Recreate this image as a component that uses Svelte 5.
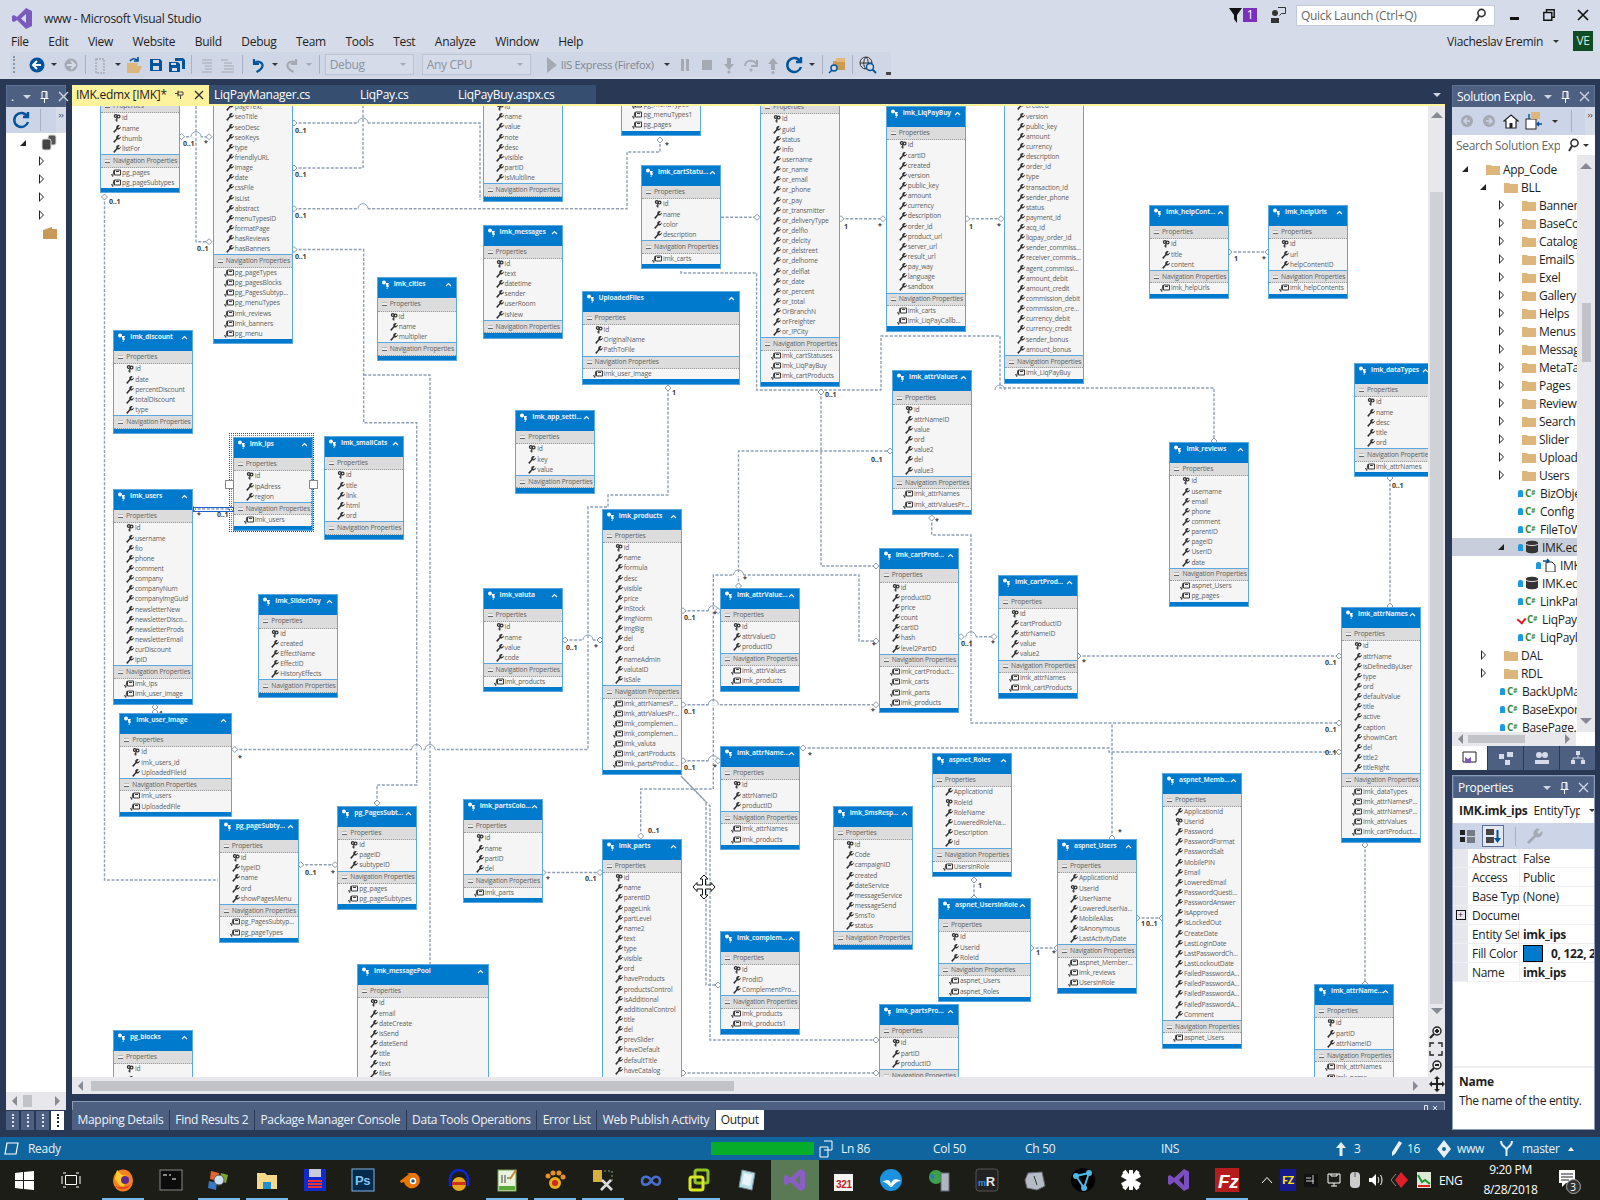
<script>
	// edmx entities: name, x, y, properties, navigation, width. Positions are page coordinates.
	const mk = (name, x, y, props, nav = '', w = 80) => ({
		name,
		left: x - 72,
		top: y - 106,
		w,
		props: props.split('|'),
		nav: nav ? nav.split('|') : []
	});

	const entities = [
		mk('pg_pageTypes', 100, 79, '#id|name|thumb|listFor', 'pg_pages|pg_pageSubtypes'),
		mk('pg_pages', 212.7, 37.5, '#id|name|url|pageText|seoTitle|seoDesc|seoKeys|type|friendlyURL|image|date|cssFile|isList|abstract|menuTypesID|formatPage|hasReviews|hasBanners', 'pg_pageTypes|pg_pagesBlocks|pg_PagesSubtyp...|pg_menuTypes|imk_reviews|imk_banners|pg_menu'),
		mk('pg_blockTypes', 482.6, 67.7, '#id|name|value|note|desc|visible|partID|isMultiline'),
		mk('pg_menu', 621.4, 31.8, '#id|name', 'pg_menuTypes|pg_menuTypes1|pg_pages'),
		mk('imk_cartStatu...', 641, 165, '#id|name|color|description', 'imk_carts'),
		mk('imk_carts', 760, 80, '#id|guid|status|info|username|or_name|or_email|or_phone|or_pay|or_transmitter|or_deliveryType|or_delfio|or_delcity|or_delstreet|or_delhome|or_delflat|or_date|or_percent|or_total|OrBranchN|orFreighter|or_IPCity', 'imk_cartStatuses|imk_LiqPayBuy|imk_cartProducts'),
		mk('imk_LiqPayBuy', 885.7, 106, '#id|cartID|created|version|public_key|amount|currency|description|order_id|product_url|server_url|result_url|pay_way|language|sandbox', 'imk_carts|imk_LiqPayCallb...'),
		mk('imk_LiqPayCallback', 1004, 46.7, '#id|cartID|created|version|public_key|amount|currency|description|order_id|type|transaction_id|sender_phone|status|payment_id|acq_id|liqpay_order_id|sender_commiss...|receiver_commis...|agent_commissi...|amount_debit|amount_credit|commission_debit|commission_cre...|currency_debit|currency_credit|sender_bonus|amount_bonus', 'imk_LiqPayBuy'),
		mk('imk_helpCont...', 1149, 205, '#id|title|content', 'imk_helpUrls'),
		mk('imk_helpUrls', 1268, 205, '#id|url|helpContentID', 'imk_helpContents'),
		mk('imk_messages', 482.6, 224.5, '#id|text|datetime|sender|userRoom|isNew'),
		mk('imk_cities', 376.7, 277.3, '#id|name|multiplier'),
		mk('UploadedFiles', 581.6, 290.8, '#Id|OriginalName|PathToFile', 'imk_user_image', 158),
		mk('imk_discount', 113.3, 330, '#id|date|percentDiscount|totalDiscount|type'),
		mk('imk_ips', 232.7, 437, '#id|ipAdress|region', 'imk_users'),
		mk('imk_smallCats', 324, 436, '#id|title|link|html|ord'),
		mk('imk_users', 113, 489, '#id|username|fio|phone|comment|company|companyNum|companyImgGuid|newsletterNew|newsletterDisco...|newsletterProds|newsletterEmail|curDiscount|ipID', 'imk_ips|imk_user_image'),
		mk('imk_app_setti...', 515.3, 410, '#id|key|value'),
		mk('imk_attrValues', 892, 370.4, '#id|attrNameID|value|ord|value2|del|value3', 'imk_attrNames|imk_attrValuesPr...'),
		mk('imk_reviews', 1169.4, 442, '#id|username|email|phone|comment|parentID|pageID|UserID|date', 'aspnet_Users|pg_pages'),
		mk('imk_dataTypes', 1354, 363, '#id|name|desc|title|ord', 'imk_attrNames'),
		mk('imk_products', 601.7, 508.7, '#id|name|formula|desc|visible|price|inStock|imgNorm|imgBig|del|ord|nameAdmin|valutaID|isSale', 'imk_attrNamesP...|imk_attrValuesPr...|imk_complemen...|imk_complemen...|imk_valuta|imk_cartProducts|imk_partsProduc...'),
		mk('imk_valuta', 482.6, 588, '#id|name|value|code', 'imk_products'),
		mk('imk_SliderDay', 258.3, 594.3, '#id|created|EffectName|EffectID|HistoryEffects'),
		mk('imk_attrValue...', 720, 587.7, '#id|attrValueID|productID', 'imk_attrValues|imk_products'),
		mk('imk_cartProd...', 878.7, 548.3, '#id|productID|price|count|cartID|hash|level2PartID', 'imk_cartProduct...|imk_carts|imk_parts|imk_products'),
		mk('imk_cartProd...', 998, 574.5, '#id|cartProductID|attrNameID|value|value2', 'imk_attrNames|imk_cartProducts'),
		mk('imk_attrNames', 1341, 607, '#id|attrName|isDefinedByUser|type|ord|defaultValue|title|active|caption|showInCart|del|title2|titleRight', 'imk_dataTypes|imk_attrNamesP...|imk_attrNamesP...|imk_attrValues|imk_cartProduct...'),
		mk('imk_user_image', 119.3, 713, '#Id|imk_users_id|UploadedFileId', 'imk_users|UploadedFile', 113),
		mk('imk_attrName...', 720, 746, '#id|attrNameID|productID', 'imk_attrNames|imk_products'),
		mk('aspnet_Roles', 931.7, 753, 'ApplicationId|#RoleId|RoleName|LoweredRoleNa...|Description|Id', 'UsersInRole'),
		mk('aspnet_Memb...', 1162, 772.5, 'ApplicationId|#UserId|Password|PasswordFormat|PasswordSalt|MobilePIN|Email|LoweredEmail|PasswordQuesti...|PasswordAnswer|IsApproved|IsLockedOut|CreateDate|LastLoginDate|LastPasswordCh...|LastLockoutDate|FailedPasswordA...|FailedPasswordA...|FailedPasswordA...|FailedPasswordA...|Comment', 'aspnet_Users'),
		mk('imk_SmsResp...', 832.7, 805.7, '#id|Code|campaignID|created|dateService|messageService|messageSend|SmsTo|status'),
		mk('pg_PagesSubt...', 337.3, 805.7, '#id|pageID|subtypeID', 'pg_pages|pg_pageSubtypes'),
		mk('pg_pageSubty...', 218.7, 818.7, '#id|typeID|name|ord|showPagesMenu', 'pg_PagesSubtyp...|pg_pageTypes'),
		mk('imk_partsColo...', 462.7, 799, '#id|name|partID|del', 'imk_parts'),
		mk('imk_parts', 601.7, 838.7, '#id|name|parentID|pageLink|partLevel|name2|text|type|visible|ord|haveProducts|productsControl|isAdditional|additionalControl|title|del|prevSlider|haveDefault|defaultTitle|haveCatalog|catalogTitle'),
		mk('aspnet_Users', 1057, 839, 'ApplicationId|#UserId|UserName|LoweredUserNa...|MobileAlias|IsAnonymous|LastActivityDate', 'aspnet_Member...|imk_reviews|UsersInRole'),
		mk('aspnet_UsersInRole', 938, 898, '#Id|UserId|RoleId', 'aspnet_Users|aspnet_Roles', 93),
		mk('imk_complem...', 720, 930.6, '#id|ProdID|ComplementPro...', 'imk_products|imk_products1'),
		mk('imk_messagePool', 357, 964, '#id|email|dateCreate|isSend|dateSend|title|text|files|attachments|status', '', 132),
		mk('pg_blocks', 113, 1030, '#id|name|text|type'),
		mk('imk_partsPro...', 878.7, 1004, '#id|partID|productID', 'imk_parts'),
		mk('imk_attrName...', 1314, 984, '#id|partID|attrNameID', 'imk_attrNames|imk_name')
	];

	// [points, diamond at start, diamond at end]
	const links = [
		['181.5,136.7 209,136.7', 1, 1],
		['196,106 196,241.7 209,241.7', 0, 1],
		['104.5,197 104.5,880 218,880', 1, 0],
		['294,123 480,123 480,200', 1, 0],
		['294,208.7 627,208.7 627,152 660,152 660,140', 1, 1],
		['294,168 363,168 363,106', 1, 0],
		['294,249.5 363.7,249.5 363.7,422.7 416.7,422.7 416.7,785 377,785 377,803', 1, 1],
		['363.7,375 430,375 430,964', 0, 0],
		['234.7,749.5 588,749.5 588,507 608,507 608,495 668,495 668,388', 1, 1],
		['565,640 600,640', 1, 1],
		['721,217.3 757,217.3', 0, 1],
		['841,218.7 883,218.7', 1, 1],
		['967,218.7 1001,218.7', 1, 1],
		['681,271 681,273 756.6,273 756.6,390 881,390 881,336 1000,336 1000,388 1214,388 1214,441', 0, 1],
		['821,392 821,566 876,566', 1, 1],
		['683,610.7 718,610.7', 1, 1],
		['683,704.7 876,704.7', 1, 1],
		['683,760.7 718,760.7', 1, 1],
		['640.7,836 640.7,789 713.3,789 713.3,575 859,575 859,641 876,641', 1, 1],
		['738.5,586 738.5,451 890,451', 1, 1],
		['931.7,518 931.7,535 971,535 971,723 1339,723', 1, 1],
		['961,636.7 994,636.7', 1, 1],
		['1078,656 1339,656', 1, 1],
		['803,748 1109,748 1109,752 1339,752', 1, 1],
		['1390,606 1390,478', 1, 1],
		['1112,838 1112,724', 1, 0],
		['974,880 974,898', 1, 1],
		['1031,948 1057,948', 1, 1],
		['1137,918 1162,918', 1, 1],
		['300.7,864.7 335,864.7', 1, 1],
		['543,872.5 600,872.5', 1, 1],
		['681,776 706,802 706,985 718,985', 0, 1],
		['683,778 710,806 710,1040 876,1040', 0, 1],
		['683,1073 876,1073', 1, 1],
		['1229,252 1268,252', 1, 1],
		['1365,845 1365,984', 1, 1],
		['193,509 231,509', 1, 1],
		['155,707 155,712', 1, 1]
	];

	const labels = [
		['0..1', 183, 146], ['*', 204, 145], ['0..1', 197, 251], ['0..1', 109, 204], ['0..1', 295, 133], ['0..1', 295, 177],
		['0..1', 295, 218], ['0..1', 295, 259], ['*', 665, 147], ['1', 844, 229], ['*', 878, 228], ['1', 969, 229], ['*', 997, 228],
		['0..1', 825, 397], ['*', 238, 760], ['1', 672, 395], ['0..1', 566, 650], ['*', 594, 649], ['0..1', 684, 620], ['*', 713, 616],
		['0..1', 684, 714], ['*', 871, 713], ['0..1', 684, 770], ['*', 713, 769], ['0..1', 648, 833], ['*', 872, 647], ['0..1', 871, 462],
		['*', 743, 581], ['*', 935, 523], ['0..1', 961, 646], ['*', 991, 645], ['*', 1082, 664], ['0..1', 1325, 665], ['*', 808, 757],
		['0..1', 1325, 755], ['0..1', 1325, 732], ['0..1', 1392, 488], ['*', 1118, 834], ['1', 978, 888], ['1', 1036, 955], ['*', 1052, 955],
		['1', 1141, 926], ['0..1', 1146, 926], ['0..1', 305, 875], ['*', 331, 875], ['*', 546, 881], ['0..1', 585, 881], ['1', 1234, 261],
		['*', 1262, 261], ['*', 197, 517], ['0..1', 217, 517], ['1', 159, 716], ['*', 152, 703]
	];

	const bridges = [
		[363, 123], [363, 208.7], [416.7, 749.5], [430, 749.5], [713.3, 610.7], [713.3, 704.7], [713.3, 760.7],
		[588, 640], [196, 136.7], [738.5, 575], [1000, 390], [971, 636.7]
	];

	const diamonds = [];
	for (const [pts, a, b] of links) {
		const list = pts.split(' ');
		if (a) diamonds.push(list[0].split(','));
		if (b) diamonds.push(list[list.length - 1].split(','));
	}

	const menu = ['File', 'Edit', 'View', 'Website', 'Build', 'Debug', 'Team', 'Tools', 'Test', 'Analyze', 'Window', 'Help'];
	const bottomTabs = ['Mapping Details', 'Find Results 2', 'Package Manager Console', 'Data Tools Operations', 'Error List', 'Web Publish Activity'];

	const tree = [
		['App_Code', 0, 'open', 'folder'], ['BLL', 1, 'open', 'folder'],
		...['Banner', 'BaseCo', 'Catalog', 'EmailS', 'Exel', 'Gallery', 'Helps', 'Menus', 'Messag', 'MetaTa', 'Pages', 'Review', 'Search', 'Slider', 'Upload', 'Users'].map((t) => [t, 2, 'closed', 'folder']),
		['BizObje', 2, '', 'cs'], ['Config', 2, '', 'cs'], ['FileToW', 2, '', 'cs'],
		['IMK.ed', 2, 'open', 'edmx', 'sel'], ['IMK', 3, '', 'gen'], ['IMK.ed', 2, '', 'db'],
		['LinkPat', 2, '', 'cs'], ['LiqPay.', 2, '', 'check'], ['LiqPayl', 2, '', 'cs'],
		['DAL', 1, 'closed', 'folder'], ['RDL', 1, 'closed', 'folder'],
		['BackUpMa', 1, '', 'cs'], ['BaseExport', 1, '', 'cs'], ['BasePage.', 1, '', 'cs']
	];

	const props = [
		['Abstract', 'False'], ['Access', 'Public'], ['Base Typ', '(None)'], ['Documen', '', 'plus'],
		['Entity Set', 'imk_ips', 'bold'], ['Fill Color', '0, 122, 204', 'swatch'], ['Name', 'imk_ips', 'bold']
	];

	const svg = (w, h, body) => `<svg width="${w}" height="${h}" viewBox="0 0 ${w} ${h}">${body}</svg>`;
	const taskIcons = [
		svg(24, 24, '<path fill="#fff" d="M3 5l8-1v8H3zM12 4l10-1v9H12zM3 13h8v8l-8-1zM12 13h10v9l-10-1z"/>'),
		svg(24, 24, '<path fill="none" stroke="#fff" d="M5.5 7.5h11v9h-11zM3 5h3M3 19h3M16 5h3M16 19h3M20 8v8M2 8v8"/>'),
		svg(24, 24, '<ellipse cx="12" cy="12.500" rx="10" ry="11" fill="#f5811f"/><path fill="#ffcb2e" d="M6 2l5 5 6 1-3 4-1 7-5-2-4-6z"/><circle cx="14" cy="12" r="4" fill="#5e2a8c"/><path fill="#e8431f" d="M4 18c4 4 12 5 16-2-3 3-10 4-16 2z"/>'),
		svg(24, 24, '<rect x="1" y="2" width="22" height="20" fill="#0c0c0c" stroke="#888"/><path stroke="#fff" d="M4 7h4M10 7h2M13 11h4"/>'),
		svg(24, 24, '<path fill="#e8642c" d="M4 3l8 2-1 8-8-2z"/><path fill="#7ca82b" d="M14 5l7 2-2 8-6-2z"/><path fill="#3b78c2" d="M2 13l8 2-1 7-8-2z"/><circle cx="12" cy="12" r="5" fill="#cfe0f3" stroke="#555"/>'),
		svg(24, 24, '<path fill="#f5d98a" d="M2 5h8l2 2h10v14H2z"/><rect x="8" y="14" width="8" height="7" fill="#1f8fd6"/>'),
		svg(24, 24, '<rect x="1" y="1" width="22" height="22" fill="#0f2bd0"/><rect x="6" y="1" width="12" height="8" fill="#c8ccd8"/><path stroke="#e33" stroke-width="2" d="M5 13h14M5 16h14M5 19h14"/>'),
		svg(24, 24, '<rect x="1" y="1" width="22" height="22" fill="#062a4c" stroke="#7fb4e8"/><text x="4" y="17" font-family="Liberation Sans, sans-serif" font-size="13" font-weight="700" fill="#7fc4f0">Ps</text>'),
		svg(24, 24, '<path fill="#ea7600" d="M1 13l9-7-2-1h8a8 8 0 1 1-11 9l-3 1z"/><circle cx="14" cy="13" r="3.2" fill="#fff"/><circle cx="14" cy="13" r="1.8" fill="#265787"/>'),
		svg(24, 24, '<path fill="none" stroke="#0d26d8" stroke-width="2.5" d="M3 18V11a9 9 0 0 1 18 0v7"/><ellipse cx="12" cy="16" rx="7" ry="7" fill="#e8a520"/><rect x="5" y="14" width="14" height="3" fill="#d03018"/>'),
		svg(24, 24, '<rect x="3" y="2" width="18" height="21" fill="#e8f2dc" stroke="#7aa054"/><rect x="4" y="18" width="16" height="4" fill="#59a838"/><path stroke="#444" d="M7 7v8M10 7v8M12 10h4"/><path stroke="#c98a2b" stroke-width="2" d="M21 2l-6 9"/>'),
		svg(24, 24, '<circle cx="12" cy="15" r="6" fill="#e8b018"/><circle cx="12" cy="15" r="3" fill="#d02820"/><circle cx="5" cy="8" r="2.5" fill="#e89020"/><circle cx="10" cy="5" r="2.5" fill="#e89020"/><circle cx="16" cy="5" r="2.5" fill="#e89020"/><circle cx="20" cy="9" r="2.5" fill="#e89020"/>'),
		svg(24, 24, '<rect x="2" y="2" width="9" height="12" fill="#d8b040"/><path stroke="#8a7" stroke-dasharray="2 2" fill="none" d="M13 3h8v10"/><path stroke="#ddd" stroke-width="2.5" d="M11 12l10 10M20 12L10 22"/>'),
		svg(24, 24, '<path fill="none" stroke="#4a6fd0" stroke-width="2.5" d="M12 12c-3-5-9-4-9 1s6 5 9 0c3-6 9-5 9 0s-6 5-9-1z"/>'),
		svg(24, 24, '<rect x="8" y="2" width="13" height="13" rx="2" fill="none" stroke="#8fc31f" stroke-width="3"/><rect x="3" y="9" width="13" height="13" rx="2" fill="none" stroke="#d8e820" stroke-width="3"/>'),
		svg(24, 24, '<path fill="#b8e0ea" stroke="#789" d="M7 2l13 3-3 17-13-3z"/><path fill="#e8f4f8" d="M9 5l8 2-2 11-8-2z"/>'),
		svg(24, 24, '<path fill="#8a5fc4" d="M17 1l5 2.5v17L17 23 7 14l-4 3-2-1V8l2-1 4 3zM17 7l-5 5 5 5z"/>'),
		svg(24, 24, '<rect x="3" y="6" width="19" height="17" fill="#f4f4f4"/><path fill="#222" d="M3 2l19 1v3H3z"/><text x="5" y="20" font-family="Liberation Sans, sans-serif" font-size="10" font-weight="700" fill="#c02020">321</text>'),
		svg(24, 24, '<circle cx="12" cy="12" r="11" fill="#1b92df"/><path fill="#fff" d="M3 14c5-3 8-3 9 2 1-5 5-6 10-3-4 0-7 3-9 6h-2c-2-3-4-5-8-5z"/>'),
		svg(24, 24, '<circle cx="9" cy="9" r="7" fill="#3ca24a"/><path fill="#2a72c8" d="M3 8c3-4 6 0 3 4z"/><rect x="14" y="5" width="8" height="18" fill="#b0b6c0" stroke="#667"/>'),
		svg(24, 24, '<rect x="1" y="1" width="22" height="22" rx="3" fill="#222" stroke="#555"/><text x="3" y="18" font-family="Liberation Sans, sans-serif" font-size="13" font-weight="700" fill="#e8e8e8"><tspan fill="#3a8fe0" font-size="9">m</tspan>R</text>'),
		svg(24, 24, '<path fill="#b6bcc6" stroke="#667" d="M5 5l14-1 3 14-8 4-10-2-2-8z"/><path stroke="#333" d="M11 8l3 9"/>'),
		svg(24, 24, '<circle cx="12" cy="12" r="12" fill="#000"/><g stroke="#4db8e8" stroke-width="2" fill="#4db8e8"><path d="M5 8l13-3-5 15z" fill="none"/><circle cx="5" cy="8" r="2"/><circle cx="18" cy="5" r="2"/><circle cx="13" cy="20" r="2"/></g>'),
		svg(24, 24, '<path stroke="#fff" stroke-width="4" d="M12 2v20M3 7l18 10M21 7L3 17M5 3l14 18M19 3L5 21"/>'),
		svg(24, 24, '<path fill="#7c4dbe" d="M17 1l5 2.5v17L17 23 7 14l-4 3-2-1V8l2-1 4 3zM17 7l-5 5 5 5z"/>'),
		svg(24, 24, '<rect width="24" height="24" fill="#b71c1c"/><text x="3" y="20" font-family="Liberation Sans, sans-serif" font-size="19" font-weight="700" font-style="italic" fill="#fff">Fz</text>')
	];
</script>

<svg class="sprite" width="0" height="0">
	<defs>
		<symbol id="w" viewBox="0 0 8 8"><path d="M.2 6.800 3.400 3.200A2.400 2.400 0 0 1 6.800.300L5 2.200l.9 1 1.800-1.700a2.400 2.400 0 0 1-3.300 2.700L1.300 7.900z" fill="#2e2e2e" /></symbol>
		<symbol id="k" viewBox="0 0 8 8"><g fill="none" stroke="#2e2e2e" stroke-width="1.200"><circle cx="2.800" cy="2" r="1.400" /><circle cx="5.600" cy="2.600" r="1.400" /><path d="M3.800 4v3.600M2.200 6h1.600" /></g></symbol>
		<symbol id="n" viewBox="0 0 10 8"><g fill="none" stroke="#3a3a3a" stroke-width="1"><path d="M3.500 1h6v5h-6zM.5 5l1.200 2.500L3 1" /><path d="M5 2.500h3" /></g></symbol>
		<symbol id="h" viewBox="0 0 9 9"><g fill="#fff"><circle cx="3" cy="2.600" r="2" /><path d="M5 3h3L6.500 6.200V9H5.500L6.500 6.200 5 5z" /><circle cx="6.500" cy="6" r="1.300" /></g></symbol>
	</defs>
</svg>

<div class="app">
	<header class="top">
		<div class="title-row">
			<svg class="vs-logo" width="20" height="21" viewBox="0 0 20 21"><path fill="#7a5bbd" d="M14 0l6 3v15l-6 3L5 12l-3 2-2-1V8l2-1 3 2zM14 6l-5 4.500 5 4.500z" /></svg>
			<span class="win-title">www - Microsoft Visual Studio</span>
			<div class="title-right">
				<svg width="13" height="15" viewBox="0 0 13 15"><path fill="#111" d="M0 0h13L8 7v8L5 11V7z" /></svg>
				<span class="badge">1</span>
				<svg class="fb" width="15" height="16" viewBox="0 0 15 16"><circle cx="4" cy="6" r="3" fill="#333" /><path fill="#333" d="M0 16v-5h8v5z" /><path fill="none" stroke="#333" d="M7 .5h7.500v6h-4l-2 2" /></svg>
				<div class="quick">
					<span>Quick Launch (Ctrl+Q)</span>
					<svg width="14" height="14" viewBox="0 0 14 14"><circle cx="8.500" cy="5" r="3.600" fill="none" stroke="#333" stroke-width="1.600" /><path stroke="#333" stroke-width="2" d="M6 8l-3 5" /></svg>
				</div>
				<div class="winbtns">
					<svg width="10" height="10" viewBox="0 0 10 10"><rect x="0" y="7" width="9" height="3" fill="#111" /></svg>
					<svg width="12" height="12" viewBox="0 0 12 12"><path fill="none" stroke="#111" stroke-width="1.400" d="M3.500 3V.8h7.700v7.400H9M.8 3.500h8v7.700h-8z" /></svg>
					<svg width="12" height="12" viewBox="0 0 12 12"><path stroke="#111" stroke-width="1.700" d="M1 1l10 10M11 1L1 11" /></svg>
				</div>
			</div>
		</div>
		<div class="menu-row">
			<nav class="menu">
				{#each menu as m}<span>{m}</span>{/each}
			</nav>
			<div class="user">
				<span>Viacheslav Eremin</span>
				<i class="caret dark"></i>
				<b class="avatar">VE</b>
			</div>
		</div>
		<div class="toolbar">
			<span class="grip"></span>
			<svg class="ic" width="20" height="20" viewBox="0 0 20 20"><circle cx="10" cy="10" r="7.500" fill="#00539c" /><path stroke="#fff" stroke-width="2" fill="none" d="M14 10H7M10 6l-4 4 4 4" /></svg>
			<i class="caret dark"></i>
			<svg class="ic" width="20" height="20" viewBox="0 0 20 20"><circle cx="10" cy="10" r="6.500" fill="#a4a9b3" /><path stroke="#d6dbe9" stroke-width="2" fill="none" d="M6 10h7M10 6l4 4-4 4" /></svg>
			<span class="sep"></span>
			<svg class="ic" width="20" height="20" viewBox="0 0 20 20"><path fill="none" stroke="#a4a9b3" stroke-width="1.400" stroke-dasharray="2 1" d="M5 4h8v14H5z" /></svg>
			<i class="caret dark"></i>
			<svg class="ic" width="20" height="20" viewBox="0 0 20 20"><path fill="#dcb67a" d="M2 8h11l-1 3h5l-3 7H2z" /><path fill="none" stroke="#00539c" stroke-width="1.600" d="M5 6c2-3 6-3 8 0M13 2v4H9" /></svg>
			<svg class="ic" width="20" height="20" viewBox="0 0 20 20"><path fill="#00539c" d="M4 4h10l2 2v10H4z" /><rect x="7" y="5" width="6" height="3" fill="#d6dbe9" /><rect x="7" y="11" width="6" height="4" fill="#d6dbe9" /></svg>
			<svg class="ic" width="20" height="20" viewBox="0 0 20 20"><path fill="#00539c" d="M2 7h9l2 2v8H2z" /><path fill="#00539c" d="M8 3h8l2 2v9h-3V6H8z" /><rect x="5" y="13" width="5" height="3" fill="#d6dbe9" /><rect x="4" y="8" width="5" height="2" fill="#d6dbe9" /></svg>
			<span class="sep"></span>
			<svg class="ic" width="20" height="20" viewBox="0 0 20 20"><path stroke="#a4a9b3" stroke-width="1.200" d="M5 5h10M5 8h10M8 11h7M8 14h7M5 17h10" /></svg>
			<svg class="ic" width="20" height="20" viewBox="0 0 20 20"><path stroke="#a4a9b3" stroke-width="1.200" d="M3 5h7M6 8h8M6 11h10M6 14h10M3 17h13" /></svg>
			<span class="sep"></span>
			<svg class="ic" width="20" height="20" viewBox="0 0 20 20"><path fill="none" stroke="#00539c" stroke-width="2.200" d="M6 4v5h5M6.500 8.500C9 5 15 7 14.500 11c-.5 3-3 4.500-6 6" /></svg>
			<i class="caret dark"></i>
			<svg class="ic" width="20" height="20" viewBox="0 0 20 20"><path fill="none" stroke="#a4a9b3" stroke-width="2.200" d="M14 4v5H9M13.500 8.500C11 5 5 7 5.500 11c.5 3 3 4.500 6 6" /></svg>
			<i class="caret"></i>
			<span class="sep"></span>
			<div class="dd wide">Debug<i class="caret"></i></div>
			<div class="dd wider">Any CPU<i class="caret"></i></div>
			<svg class="play" width="14" height="20" viewBox="0 0 14 20"><path fill="#a4a9b3" d="M2 2l10 8-10 8z" /></svg>
			<span class="run">IIS Express (Firefox)</span>
			<i class="caret dark"></i>
			<svg class="ic dbg" width="20" height="20" viewBox="0 0 20 20"><path fill="#a4a9b3" d="M6 4h3v12H6zM11 4h3v12h-3z" /></svg>
			<svg class="ic dbg" width="20" height="20" viewBox="0 0 20 20"><rect x="5" y="5" width="10" height="10" fill="#a4a9b3" /></svg>
			<svg class="ic dbg" width="20" height="20" viewBox="0 0 20 20"><path fill="#a4a9b3" d="M8 3h4v6h3l-5 6-5-6h3z" /><circle cx="10" cy="17" r="1.600" fill="#a4a9b3" /></svg>
			<svg class="ic dbg" width="20" height="20" viewBox="0 0 20 20"><path fill="none" stroke="#a4a9b3" stroke-width="2" d="M4 11c0-7 11-7 12 0M16 5v6h-6" /><circle cx="10" cy="15" r="1.600" fill="#a4a9b3" /></svg>
			<svg class="ic dbg" width="20" height="20" viewBox="0 0 20 20"><path fill="#a4a9b3" d="M8 15H12V9h3l-5-6-5 6h3z" /><circle cx="10" cy="17.500" r="1.600" fill="#a4a9b3" /></svg>
			<svg class="ic dbg" width="20" height="20" viewBox="0 0 20 20"><path fill="none" stroke="#00539c" stroke-width="2.400" d="M15 6a7 7 0 1 0 1 6M16 2v5h-5" /></svg>
			<i class="caret dark"></i>
			<span class="sep"></span>
			<svg class="ic" width="20" height="20" viewBox="0 0 20 20"><path fill="#cc9b53" d="M5 6h12v9H5z" /><path fill="#e2b97a" d="M8 3h9v4H8z" /><circle cx="6" cy="13" r="3" fill="#d6dbe9" stroke="#00539c" stroke-width="1.400" /><path stroke="#00539c" stroke-width="1.600" d="M4 15l-3 3" /></svg>
			<span class="sep"></span>
			<svg class="ic" width="20" height="20" viewBox="0 0 20 20"><circle cx="8" cy="8" r="6" fill="none" stroke="#333" /><path stroke="#333" fill="none" d="M2 8h12M8 2c-3 3-3 9 0 12M8 2c3 3 3 9 0 12" /><circle cx="12" cy="12" r="3.500" fill="#d6dbe9" stroke="#00539c" stroke-width="1.400" /><path stroke="#00539c" stroke-width="1.800" d="M14.500 14.500l3.500 3.500" /></svg>
			<span class="more"></span>
		</div>
	</header>

	<main class="workspace">
		<aside class="left">
			<div class="pane-head">
				<span>.</span>
				<i class="caret light"></i>
				<svg class="pin" width="9" height="12" viewBox="0 0 9 12"><path fill="none" stroke="#fff" d="M2 .5h5v7H2zM.5 7.500h8M4.500 8v4M6 1v6" /></svg>
				<svg class="x" width="11" height="11" viewBox="0 0 11 11"><path stroke="#cfd6e5" stroke-width="1.400" d="M1 1l9 9M10 1l-9 9" /></svg>
			</div>
			<div class="pane-tools left-tools">
				<svg width="20" height="20" viewBox="0 0 20 20"><path fill="none" stroke="#00539c" stroke-width="2.400" d="M15 6a7 7 0 1 0 1 6M16 2v5h-5" /></svg>
				<span class="sep tall"></span>
				<span class="chev">››</span>
			</div>
			<div class="left-body">
				<div class="lrow first">
					<i class="tri-open"></i>
					<svg width="16" height="17" viewBox="0 0 16 17"><rect x="7" y="1" width="8" height="10" rx="2" fill="#555" stroke="#ddd" /><rect x="1" y="5" width="9" height="11" rx="2" fill="#444" stroke="#ddd" /></svg>
				</div>
				{#each [0, 1, 2, 3] as i}
					<div class="lrow"><i class="tri-closed"></i></div>
				{/each}
				<div class="lrow folder-row">
					<svg width="14" height="12" viewBox="0 0 14 12"><path fill="#c9995a" d="M0 3l9-3v2h5v10H0z" /></svg>
				</div>
			</div>
			<div class="left-scroll">
				<i class="arrow-l"></i>
				<span class="left-thumb"></span>
				<i class="arrow-r"></i>
			</div>
			<div class="left-tabs">
				<span class="lt"></span><span class="lt"></span><span class="lt"></span><span class="lt on"></span>
			</div>
		</aside>

		<section class="doc">
			<div class="tabstrip">
				<div class="tab active">
					<span>IMK.edmx [IMK]*</span>
					<svg class="tab-pin" width="10" height="10" viewBox="0 0 10 10"><path fill="none" stroke="#444" d="M3 5h5V2H3zM0 3.500h3M3 .5v6M5.500 5v4" /></svg>
					<svg class="tab-x" width="10" height="10" viewBox="0 0 10 10"><path stroke="#333" stroke-width="1.400" d="M1 1l8 8M9 1l-8 8" /></svg>
				</div>
				<div class="rest-tabs">
					<span class="tab t1">LiqPayManager.cs</span>
					<span class="tab t2">LiqPay.cs</span>
					<span class="tab t3">LiqPayBuy.aspx.cs</span>
				</div>
				<i class="caret light strip-caret"></i>
			</div>
			<div class="doc-main">
				<div class="doc-center">
					<div class="canvas">
						<svg class="wires" width="1356" height="971" viewBox="72 106 1356 971">
							{#each links as l}
								<polyline points={l[0]} />
							{/each}
							{#each bridges as b}
								<rect x={b[0] - 5} y={b[1] - 1} width="10" height="2" fill="#fff" stroke="none" />
								<path d="M{b[0] - 5} {b[1]}a5 5 0 0 1 10 0" class="arc" />
							{/each}
							{#each diamonds as d}
								<path class="dia" d="M{d[0]} {+d[1] - 3}l3 3-3 3-3-3z" />
							{/each}
							{#each labels as t}
								<text x={t[1]} y={t[2]}>{t[0]}</text>
							{/each}
						</svg>
						{#each entities as e}
							<div class="entity" style="left:{e.left}px;top:{e.top}px;width:{e.w}px">
								<div class="ent-head">
									<svg class="ent-ico" width="9" height="9"><use href="#h" /></svg>
									<span class="ent-name">{e.name}</span>
									<svg class="ent-chev" width="7" height="5" viewBox="0 0 7 5"><path d="M1 4l2.500-2.500L6 4" fill="none" stroke="#fff" stroke-width="1.200" /></svg>
								</div>
								<div class="sec"><i class="mini"></i>Properties</div>
								{#each e.props as p}
									<div class="row">
										<svg class="row-ico" width="8" height="8"><use href={p[0] === '#' ? '#k' : '#w'} /></svg>
										<span>{p.replace('#', '')}</span>
									</div>
								{/each}
								<div class="sec nav"><i class="mini"></i>Navigation Properties</div>
								{#each e.nav as p}
									<div class="row">
										<svg class="row-ico navi" width="10" height="8"><use href="#n" /></svg>
										<span>{p}</span>
									</div>
								{/each}
								<div class="ent-foot"></div>
							</div>
						{/each}
						<div class="selection">
							<i class="handle hl"></i><i class="handle hr"></i>
						</div>
						<div class="assoc"></div>
						<svg class="mover" width="24" height="26" viewBox="0 0 24 26"><path fill="#fff" stroke="#111" d="M12 1l4 4h-2.500v6H19V8.500l4 4.500-4 4.500V15h-5.500v6H16l-4 4-4-4h2.500v-6H5v2.500L1 13l4-4.500V11h5.500V5H8z" /></svg>
					</div>
					<div class="hscroll">
						<i class="arrow-l"></i>
						<span class="hthumb"></span>
						<i class="arrow-r push"></i>
					</div>
				</div>
				<div class="vscroll">
					<i class="arrow-u"></i>
					<span class="vthumb"></span>
					<i class="arrow-d"></i>
					<div class="zoomers">
						<svg width="14" height="14" viewBox="0 0 14 14"><circle cx="8" cy="6" r="4" fill="none" stroke="#222" stroke-width="1.400" /><path stroke="#222" stroke-width="2" d="M5 9l-4 4M6 6h4M8 4v4" /></svg>
						<svg width="14" height="14" viewBox="0 0 14 14"><path fill="none" stroke="#222" stroke-width="1.400" d="M1 5V1h4M9 1h4v4M13 9v4H9M5 13H1V9" /></svg>
						<svg width="14" height="14" viewBox="0 0 14 14"><circle cx="8" cy="6" r="4" fill="none" stroke="#222" stroke-width="1.400" /><path stroke="#222" stroke-width="2" d="M5 9l-4 4M6 6h4" /></svg>
						<svg width="16" height="16" viewBox="0 0 16 16"><path fill="#222" d="M8 0l3 3H9v4h4V5l3 3-3 3V9H9v4h2l-3 3-3-3h2V9H3v2L0 8l3-3v2h4V3H5z" /></svg>
					</div>
				</div>
			</div>
			<div class="output-head">
				<svg width="14" height="5" viewBox="0 0 14 5" class="oh"><path fill="none" stroke="#dfe5ef" d="M.5 5V.5h3V5M9 1l4 4M13 1L9 5" /></svg>
			</div>
			<div class="bottom-tabs">
				{#each bottomTabs as t}<span class="btab">{t}</span>{/each}
				<span class="btab on">Output</span>
			</div>
		</section>

		<aside class="right">
			<div class="sol">
				<div class="pane-head">
					<span class="pane-title">Solution Explo...</span>
					<i class="caret light"></i>
					<svg class="pin" width="9" height="12" viewBox="0 0 9 12"><path fill="none" stroke="#fff" d="M2 .5h5v7H2zM.5 7.500h8M4.500 8v4M6 1v6" /></svg>
					<svg class="x" width="11" height="11" viewBox="0 0 11 11"><path stroke="#cfd6e5" stroke-width="1.400" d="M1 1l9 9M10 1l-9 9" /></svg>
				</div>
				<div class="pane-tools sol-tools">
					<svg width="16" height="16" viewBox="0 0 16 16"><circle cx="8" cy="8" r="6" fill="#a4a9b3" /><path stroke="#ccd5e8" stroke-width="1.600" fill="none" d="M11 8H5M8 5L5 8l3 3" /></svg>
					<svg width="16" height="16" viewBox="0 0 16 16"><circle cx="8" cy="8" r="6" fill="#a4a9b3" /><path stroke="#ccd5e8" stroke-width="1.600" fill="none" d="M5 8h6M8 5l3 3-3 3" /></svg>
					<svg width="16" height="16" viewBox="0 0 16 16"><path fill="#fff" stroke="#222" stroke-width="1.200" d="M1 8l7-6 7 6h-2v7H3V8z" /><rect x="6.500" y="10" width="3" height="5" fill="#222" /></svg>
					<svg width="18" height="20" viewBox="0 0 18 20"><rect x="1" y="8" width="10" height="10" fill="#fff" stroke="#222" /><path fill="#dcb67a" d="M6 1h9v7H6z" /><path stroke="#00539c" stroke-width="1.400" d="M12 13h5M14 11l-2 2 2 2M4 3v5" /></svg>
					<i class="caret dark"></i>
					<span class="sep tall"></span>
					<span class="chev">››</span>
				</div>
				<div class="sol-search">
					<span>Search Solution Exp</span>
					<svg width="14" height="14" viewBox="0 0 14 14"><circle cx="8.500" cy="5" r="3.600" fill="none" stroke="#333" stroke-width="1.600" /><path stroke="#333" stroke-width="2" d="M6 8l-3 5" /></svg>
					<i class="caret dark"></i>
				</div>
				<div class="tree-wrap">
					<div class="tree">
						{#each tree as [t, d, state, kind, sel]}
							<div class="node" class:sel style="padding-left:{6 + d * 18}px">
								<span class="twisty">
									{#if state === 'open'}<i class="tri-open"></i>{:else if state === 'closed'}<i class="tri-closed"></i>{/if}
								</span>
								{#if kind === 'folder'}
									<svg class="t-ico" width="14" height="12" viewBox="0 0 14 12"><path fill="#dcb67a" d="M0 2h5l1 1h8v9H0z" /></svg>
								{:else if kind === 'gen'}
									<span class="lock"></span>
									<svg class="t-ico" width="14" height="14" viewBox="0 0 14 14"><path fill="#fff" stroke="#222" d="M3 4h6l3 3v7H3z" /><path stroke="#00539c" stroke-width="1.500" d="M0 3h6M4 1l2 2-2 2" /></svg>
								{:else if kind === 'db' || kind === 'edmx'}
									<span class="lock"></span>
									<svg class="t-ico" width="14" height="14" viewBox="0 0 14 14"><path fill="#333" d="M1 3c0-3 12-3 12 0v8c0 3-12 3-12 0z" /><path stroke="#ddd" fill="none" d="M1 4c1 2 11 2 12 0" /></svg>
								{:else}
									<span class="lock" class:check={kind === 'check'}></span>
									<b class="cs">C<small>#</small></b>
								{/if}
								<span class="node-text">{t}</span>
							</div>
						{/each}
					</div>
					<div class="tree-scroll">
						<i class="arrow-u"></i>
						<span class="tree-thumb"></span>
						<i class="arrow-d"></i>
					</div>
				</div>
				<div class="tree-h">
					<i class="arrow-l"></i>
					<span class="tree-hthumb"></span>
					<i class="arrow-r"></i>
				</div>
				<div class="sol-tabs">
					<span class="st on"><svg width="16" height="14" viewBox="0 0 16 14"><path fill="none" stroke="#222" d="M1 1h13v10H1z" /><path fill="#7a5bbd" d="M3 6l3 2 3-2v6H3z" /></svg></span>
					<span class="st"><svg width="16" height="14" viewBox="0 0 16 14"><path fill="#d6dbe9" d="M1 3h5v5H1zM9 1h6v5H9zM7 9h5v5H7z" /></svg></span>
					<span class="st"><svg width="16" height="14" viewBox="0 0 16 14"><circle cx="5" cy="4" r="3" fill="#d6dbe9" /><circle cx="11" cy="4" r="3" fill="#d6dbe9" /><path fill="#d6dbe9" d="M1 13V9h14v4z" /></svg></span>
					<span class="st"><svg width="16" height="14" viewBox="0 0 16 14"><path fill="#d6dbe9" d="M6 0h4v4H6zM1 9h4v4H1zM11 9h4v4h-4z" /><path stroke="#d6dbe9" d="M8 4v3H3v2M8 7h5v2" fill="none" /></svg></span>
				</div>
			</div>

			<div class="prop">
				<div class="pane-head">
					<span class="pane-title">Properties</span>
					<i class="caret light"></i>
					<svg class="pin" width="9" height="12" viewBox="0 0 9 12"><path fill="none" stroke="#fff" d="M2 .5h5v7H2zM.5 7.500h8M4.500 8v4M6 1v6" /></svg>
					<svg class="x" width="11" height="11" viewBox="0 0 11 11"><path stroke="#cfd6e5" stroke-width="1.400" d="M1 1l9 9M10 1l-9 9" /></svg>
				</div>
				<div class="prop-title">
					<b>IMK.imk_ips</b>
					<span class="prop-type">EntityTyp</span>
					<i class="caret dark"></i>
				</div>
				<div class="prop-tools">
					<svg width="16" height="16" viewBox="0 0 16 16"><path fill="#222" d="M1 2h5v5H1zM1 9h5v5H1z" /><path stroke="#222" d="M8 3h8M8 5h8M8 7h8M8 10h8M8 12h8M8 14h8" /></svg>
					<span class="sort">
						<svg width="16" height="16" viewBox="0 0 16 16"><rect x="1" y="1" width="8" height="6" fill="#444" /><rect x="1" y="9" width="8" height="6" fill="#444" /><path stroke="#00539c" stroke-width="2" d="M12.500 2v11" /><path fill="#00539c" d="M9 10h7l-3.500 5z" /></svg>
					</span>
					<span class="sep tall small"></span>
					<svg width="17" height="17" viewBox="0 0 17 17"><path fill="#a4a9b3" d="M1 14l7-7a4.500 4.500 0 0 1 6-6l-3 3 2 2 3-3a4.500 4.500 0 0 1-6 6l-7 7z" /></svg>
				</div>
				<div class="grid">
					{#each props as [k, v, kind]}
						<div class="grid-row">
							<span class="gutter">{#if kind === 'plus'}<i class="plus">+</i>{/if}</span>
							<span class="g-key">{k}</span>
							<span class="g-val" class:strong={kind === 'bold' || kind === 'swatch'}>
								{#if kind === 'swatch'}<i class="swatch"></i>{/if}{v}
							</span>
						</div>
					{/each}
				</div>
				<div class="prop-desc">
					<b>Name</b>
					<span>The name of the entity.</span>
				</div>
			</div>
		</aside>
	</main>

	<footer class="status">
		<svg class="st-ready" width="15" height="13" viewBox="0 0 15 13"><path fill="none" stroke="#fff" stroke-width="1.200" d="M3 1h11l-2 11H1z" /></svg>
		<span class="ready">Ready</span>
		<span class="progress"></span>
		<svg class="copy" width="14" height="18" viewBox="0 0 14 18"><path fill="none" stroke="#fff" d="M5 1h8v9H5M1 7h8v10H1z" /></svg>
		<span class="cell c-ln">Ln 86</span>
		<span class="cell c-col">Col 50</span>
		<span class="cell c-col">Ch 50</span>
		<span class="cell c-ins">INS</span>
		<svg width="10" height="14" viewBox="0 0 10 14"><path fill="#e8eef4" d="M5 0l5 6H6.500v8h-3V6H0z" /></svg>
		<span class="cell c-n">3</span>
		<svg width="12" height="16" viewBox="0 0 12 16"><path fill="#e8eef4" d="M9 0l3 2-7 11-3 2 0-4z" /></svg>
		<span class="cell c-n2">16</span>
		<svg width="14" height="18" viewBox="0 0 14 18"><path fill="#e8eef4" d="M7 0l7 9-7 9-7-9z" /><circle cx="7" cy="9" r="2" fill="#10659e" /></svg>
		<span class="cell c-www">www</span>
		<svg width="15" height="17" viewBox="0 0 15 17"><path fill="none" stroke="#e8eef4" stroke-width="2" d="M2 1c0 6 5 5 5.500 9v6M13 1c0 6-5 5-5.500 9" /></svg>
		<span class="cell c-master">master</span>
		<i class="caret up"></i>
	</footer>

	<div class="taskbar">
		{#each taskIcons as icon, i}
			<span class="slot" class:hot={i === 16} class:gap={i === 2} class:live={[2, 4, 5, 10, 11, 12, 14, 25].includes(i)}>{@html icon}</span>
		{/each}
		<div class="tray">
			<svg width="12" height="8" viewBox="0 0 12 8"><path fill="none" stroke="#fff" d="M1 7l5-5.500L11 7" /></svg>
			<span class="fz">FZ</span>
			<svg width="16" height="16" viewBox="0 0 16 16"><rect x="1" y="2" width="14" height="13" fill="#111" /><path stroke="#ccc" d="M3 6h5M3 9h8M10 3v9" /></svg>
			<svg width="16" height="18" viewBox="0 0 16 18"><path fill="none" stroke="#fff" d="M2 3h12v9H2zM5 15h6M8 12v3M5 3v2h6V3" /></svg>
			<svg width="12" height="18" viewBox="0 0 12 18"><rect x="1" y="1" width="10" height="16" rx="4" fill="#ccc" /><path stroke="#555" d="M6 1v5" /></svg>
			<svg width="16" height="16" viewBox="0 0 16 16"><path fill="#fff" d="M1 6h3l4-4v12l-4-4H1z" /><path fill="none" stroke="#fff" d="M10 5c1 2 1 4 0 6M12.500 3c2 3 2 7 0 10" /></svg>
			<svg width="18" height="18" viewBox="0 0 18 18"><path fill="none" stroke="#888" d="M5 3L0 9l5 6" /><path fill="#e01f2d" d="M10 1l7 8-7 8-6-8z" /></svg>
			<svg width="16" height="18" viewBox="0 0 16 18"><rect x="1" y="1" width="14" height="16" fill="#dfe8d8" /><path fill="none" stroke="#1a9a2c" stroke-width="2" d="M2 4l4 7 3-2 5 4" /><path stroke="#d22" stroke-width="2" d="M2 15h12" /></svg>
			<span class="lang">ENG</span>
			<div class="clock"><span>9:20 PM</span><span>8/28/2018</span></div>
			<div class="notif">
				<svg width="18" height="18" viewBox="0 0 18 18"><path fill="#fff" d="M1 1h16v13H8l-4 4v-4H1z" /><path stroke="#222" d="M3 5h12M3 8h12M3 11h8" /></svg>
				<b>3</b>
			</div>
		</div>
	</div>
</div>

<style>
	:global(body) {
		margin: 0;
		background: #293955;
	}

	.sprite {
		position: absolute;
	}

	.app {
		width: 1600px;
		height: 1200px;
		overflow: hidden;
		display: flex;
		flex-direction: column;
		font-family: 'Open Sans', 'Noto Sans', sans-serif;
		font-size: 12px;
		letter-spacing: -0.3px;
		color: #1e1e1e;
	}

	i {
		display: block;
		flex: none;
	}

	.top {
		height: 79px;
		background: #d6dbe9;
		flex: none;
		display: flex;
		flex-direction: column;
	}

	.title-row {
		height: 30px;
		display: flex;
		align-items: center;
		padding-left: 12px;
	}

	.vs-logo {
		margin-top: 6px;
	}

	.win-title {
		margin: 6px 0 0 12px;
	}

	.title-right {
		margin-left: auto;
		display: flex;
		align-items: center;
	}

	.badge {
		width: 14px;
		height: 14px;
		margin-left: 1px;
		background: #7a2fbd;
		color: #fff;
		text-align: center;
		line-height: 14px;
	}

	.fb {
		margin-left: 14px;
	}

	.quick {
		width: 199px;
		height: 21px;
		box-sizing: border-box;
		margin-left: 10px;
		background: #fff;
		border: 1px solid #c2c9d9;
		display: flex;
		align-items: center;
		justify-content: space-between;
		padding: 0 7px 0 4px;
		color: #666;
	}

	.winbtns {
		width: 105px;
		display: flex;
		justify-content: space-between;
		padding: 0 11px 0 15px;
		box-sizing: border-box;
		align-items: center;
	}

	.menu-row {
		height: 22px;
		display: flex;
		align-items: center;
	}

	.menu {
		display: flex;
		gap: 19.5px;
		padding-left: 11px;
	}

	.user {
		margin-left: auto;
		display: flex;
		align-items: center;
		gap: 7px;
		padding-right: 7px;
	}

	.avatar {
		width: 20px;
		height: 20px;
		background: #0e4d23;
		color: #d5e8da;
		text-align: center;
		line-height: 20px;
		font-weight: 400;
		margin-left: 4px;
	}

	.toolbar {
		width: 881px;
		height: 25px;
		margin: 0 0 0 10px;
		padding-left: 0;
		background: #cfd6e5;
		display: flex;
		align-items: center;
		gap: 1px;
	}

	.grip {
		width: 3px;
		height: 17px;
		margin: 0 8px 0 3px;
		border-left: 2px dotted #8a94a8;
	}

	.ic {
		flex: none;
	}

	.dbg {
		margin-left: 1px;
	}

	.caret {
		width: 0;
		height: 0;
		border-left: 3px solid transparent;
		border-right: 3px solid transparent;
		border-top: 3px solid #a4a9b3;
		margin: 0 3px;
	}

	.caret.dark {
		border-top-color: #333;
	}

	.caret.light {
		border-top-color: #cfd6e5;
		border-left-width: 4px;
		border-right-width: 4px;
		border-top-width: 4px;
	}

	.caret.up {
		border-top: none;
		border-bottom: 4px solid #fff;
		margin-left: 8px;
	}

	.sep {
		width: 1px;
		height: 19px;
		background: #a8b0c2;
		margin: 0 3.5px;
		flex: none;
	}

	.sep.tall {
		height: 22px;
	}

	.sep.small {
		height: 19px;
	}

	.dd {
		height: 21px;
		box-sizing: border-box;
		border: 1px solid #bcc4d4;
		background: #d6dbe9;
		color: #8a93a3;
		display: flex;
		align-items: center;
		justify-content: space-between;
		padding: 0 4px;
		margin-right: 7px;
		flex: none;
	}

	.dd.wide {
		width: 89px;
	}

	.dd.wider {
		width: 109px;
	}

	.play {
		margin-left: 6px;
		flex: none;
	}

	.run {
		color: #7f8794;
		font-size: 11px;
		margin: 0 6px 0 1px;
		white-space: nowrap;
		flex: none;
	}

	.more {
		width: 6px;
		height: 4px;
		margin-left: 7px;
		border-bottom: 3px solid #444;
		align-self: flex-end;
		margin-bottom: 2px;
	}

	.workspace {
		flex: 1;
		min-height: 0;
		background: #293955;
		display: flex;
		padding-top: 6px;
	}

	.left {
		width: 60px;
		margin: 0 6px;
		flex: none;
		display: flex;
		flex-direction: column;
		height: 1045px;
	}

	.pane-head {
		height: 22px;
		flex: none;
		box-sizing: border-box;
		background: #4d6082;
		color: #fff;
		display: flex;
		align-items: center;
		gap: 6px;
		padding: 0 4px;
		border: 1px solid #5d7192;
		border-bottom: none;
	}

	.pane-title {
		flex: 1;
		white-space: nowrap;
		overflow: hidden;
	}

	.left .pane-head span {
		margin-right: auto;
	}

	.pin {
		flex: none;
	}

	.x {
		flex: none;
		margin-left: 3px;
	}

	.pane-tools {
		flex: none;
		display: flex;
		align-items: center;
		background: #ccd5e8;
	}

	.left-tools {
		height: 26px;
		padding-left: 6px;
		gap: 4px;
	}

	.chev {
		margin-left: auto;
		width: 10px;
		height: 100%;
		background: #d6dbe9;
		font-size: 9px;
		line-height: 16px;
		color: #333;
		text-align: center;
		flex: none;
	}

	.left-body {
		flex: 1;
		min-height: 0;
		background: #fff;
	}

	.lrow {
		height: 18px;
		display: flex;
		align-items: center;
		padding-left: 33px;
	}

	.lrow.first {
		padding-left: 14px;
		gap: 15px;
		margin-bottom: 0;
		height: 19px;
	}

	.folder-row {
		padding-left: 37px;
	}

	.tri-open {
		width: 0;
		height: 0;
		border-left: 6px solid transparent;
		border-bottom: 6px solid #222;
	}

	.tri-closed {
		width: 0;
		height: 0;
		border-left: 5px solid #222;
		border-top: 5px solid transparent;
		border-bottom: 5px solid transparent;
		position: relative;
	}

	.tri-closed::after {
		content: '';
		position: absolute;
		left: -4px;
		top: -3px;
		border-left: 3px solid #fff;
		border-top: 3px solid transparent;
		border-bottom: 3px solid transparent;
	}

	.left-scroll {
		height: 18px;
		flex: none;
		background: #e8e8ec;
		display: flex;
		align-items: center;
		padding: 0 6px;
	}

	.left-thumb {
		width: 9px;
		height: 12px;
		background: #c2c3c9;
		margin: 0 auto 0 6px;
	}

	.arrow-l {
		width: 0;
		height: 0;
		border-right: 5px solid #878a93;
		border-top: 5px solid transparent;
		border-bottom: 5px solid transparent;
	}

	.arrow-r {
		width: 0;
		height: 0;
		border-left: 5px solid #878a93;
		border-top: 5px solid transparent;
		border-bottom: 5px solid transparent;
	}

	.arrow-u {
		width: 0;
		height: 0;
		margin: 0 auto;
		border-bottom: 6px solid #878a93;
		border-left: 6px solid transparent;
		border-right: 6px solid transparent;
	}

	.arrow-d {
		width: 0;
		height: 0;
		margin: 0 auto;
		border-top: 6px solid #878a93;
		border-left: 6px solid transparent;
		border-right: 6px solid transparent;
	}

	.left-tabs {
		margin-top: 1px;
		flex: none;
		display: flex;
		gap: 2px;
		height: 19px;
	}

	.lt {
		width: 13px;
		background: #4d6082;
		border-left: 0;
		position: relative;
	}

	.lt::after {
		content: '';
		position: absolute;
		left: 6px;
		top: 3px;
		height: 13px;
		border-left: 2px dotted #dfe5ef;
	}

	.lt.on {
		background: #fff;
	}

	.lt.on::after {
		border-left-color: #222;
	}

	.doc {
		width: 1373px;
		flex: none;
		display: flex;
		flex-direction: column;
	}

	.tabstrip {
		height: 19px;
		flex: none;
		display: flex;
		align-items: stretch;
		border-bottom: 2px solid #fff29d;
		position: relative;
	}

	.tab {
		color: #fff;
		line-height: 20px;
		white-space: nowrap;
	}

	.tab.active {
		width: 137px;
		box-sizing: border-box;
		background: #fff29d;
		color: #222;
		display: flex;
		align-items: center;
		padding-left: 4px;
		gap: 5px;
	}

	.tab-pin {
		margin-left: auto;
	}

	.tab-x {
		margin: 0 5px 0 4px;
	}

	.rest-tabs {
		width: 387px;
		background: #364e6f;
		display: flex;
	}

	.t1 {
		margin-left: 5px;
		width: 146px;
	}

	.t2 {
		width: 98px;
	}

	.strip-caret {
		position: absolute;
		right: 4px;
		top: 8px;
		margin: 0;
	}

	.doc-main {
		height: 988px;
		flex: none;
		display: flex;
	}

	.doc-center {
		width: 1356px;
		flex: none;
		display: flex;
		flex-direction: column;
	}

	.canvas {
		height: 971px;
		flex: none;
		position: relative;
		overflow: hidden;
		background: #fff;
		font-size: 6.7px;
		letter-spacing: -0.15px;
		color: #5f5f5f;
	}

	.wires {
		position: absolute;
		left: 0;
		top: 0;
		fill: none;
		stroke: #8fa0b5;
		stroke-width: 1.4;
		stroke-dasharray: 3 1.6;
	}

	.arc {
		stroke-dasharray: none;
		stroke-width: 1;
	}

	.dia {
		fill: #fff;
		stroke-dasharray: none;
		stroke-width: 0.8;
		stroke: #6f8298;
	}

	.wires text {
		font-size: 7px;
		font-weight: 700;
		fill: #3a3a3a;
		stroke: none;
		font-family: 'Open Sans', sans-serif;
	}

	.entity {
		position: absolute;
		box-sizing: border-box;
		border: 1px solid #5aa8de;
		background: #f5f5f5;
		white-space: nowrap;
	}

	.ent-head {
		height: 20px;
		background: #007acc;
		position: relative;
		color: #e2f0fa;
		font-weight: 700;
	}

	.ent-ico {
		position: absolute;
		left: 3px;
		top: 2px;
	}

	.ent-name {
		position: absolute;
		left: 16px;
		top: 1px;
		line-height: 10px;
	}

	.ent-chev {
		position: absolute;
		right: 4px;
		top: 4px;
	}

	.sec {
		height: 13.4px;
		background: #dcdcdc;
		border-bottom: 1px dotted #9a9a9a;
		box-sizing: border-box;
		display: flex;
		align-items: center;
		line-height: 12px;
		padding-left: 4px;
		gap: 3px;
		overflow: hidden;
	}

	.sec.nav {
		height: 13.6px;
		border-top: 1px solid #5aa8de;
	}

	.mini {
		width: 5px;
		height: 4px;
		border-bottom: 1px solid #666;
		border-top: 1px solid #bbb;
		background: #eee;
		box-sizing: border-box;
	}

	.row {
		height: 10.15px;
		line-height: 10.15px;
		position: relative;
		padding-left: 21px;
		overflow: hidden;
	}

	.row-ico {
		position: absolute;
		left: 12px;
		top: 1px;
	}

	.navi {
		left: 10px;
	}

	.ent-foot {
		height: 4.4px;
		background: #007acc;
	}

	.selection {
		position: absolute;
		left: 157px;
		top: 327px;
		width: 85px;
		height: 99px;
		border: 1px dotted #444;
		box-sizing: border-box;
		outline: 1px dotted #777;
		outline-offset: -3px;
	}

	.handle {
		position: absolute;
		top: 46px;
		width: 7px;
		height: 7px;
		background: #fff;
		border: 1px solid #888;
	}

	.hl {
		left: -5px;
	}

	.hr {
		right: -5px;
	}

	.assoc {
		position: absolute;
		left: 121px;
		top: 401px;
		width: 39px;
		height: 3px;
		border: 1px solid #1a5fd0;
	}

	.mover {
		position: absolute;
		left: 620px;
		top: 768px;
	}

	.hscroll {
		height: 17px;
		flex: none;
		background: #e8e8ec;
		display: flex;
		align-items: center;
		padding: 0 6px;
	}

	.hthumb {
		width: 643px;
		height: 10px;
		background: #c2c3c9;
		margin-left: 8px;
	}

	.push {
		margin-left: auto;
		margin-right: 4px;
	}

	.vscroll {
		width: 17px;
		flex: none;
		background: #e8e8ec;
		padding-top: 6px;
		display: flex;
		flex-direction: column;
		position: relative;
	}

	.vthumb {
		width: 13px;
		height: 812px;
		margin: 74px auto 4px;
		background: #d0d1d7;
	}

	.zoomers {
		position: absolute;
		left: 1px;
		bottom: 2px;
		display: flex;
		flex-direction: column;
		gap: 3px;
	}

	.output-head {
		height: 9px;
		margin-top: 7px;
		flex: none;
		background: #4d6082;
		border: 1px solid #8a9bb8;
		border-bottom: none;
		box-sizing: border-box;
		position: relative;
	}

	.oh {
		position: absolute;
		right: 6px;
		bottom: 0;
	}

	.bottom-tabs {
		height: 20px;
		flex: none;
		display: flex;
		gap: 1px;
		background: #293955;
		color: #f0f3f8;
	}

	.btab {
		background: #4d6082;
		padding: 0 5.5px;
		line-height: 19px;
		white-space: nowrap;
	}

	.btab.on {
		background: #fff;
		color: #1e1e1e;
		padding: 0 5px;
	}

	.right {
		width: 143px;
		margin-left: 7px;
		flex: none;
		display: flex;
		flex-direction: column;
		gap: 5px;
	}

	.sol {
		height: 685px;
		flex: none;
		display: flex;
		flex-direction: column;
		background: #fff;
	}

	.sol-tools {
		height: 28px;
		gap: 6px;
		padding-left: 7px;
	}

	.sol-search {
		height: 20px;
		flex: none;
		display: flex;
		align-items: center;
		padding: 0 3px 0 4px;
		color: #666;
		background: #fff;
		overflow: hidden;
		white-space: nowrap;
	}

	.sol-search span {
		width: 104px;
		overflow: hidden;
		flex: none;
	}

	.sol-search svg {
		margin: 0 0 0 6px;
		flex: none;
	}

	.tree-wrap {
		flex: 1;
		min-height: 0;
		display: flex;
	}

	.tree {
		flex: 1;
		min-width: 0;
		overflow: hidden;
		padding-top: 5px;
	}

	.node {
		height: 18px;
		display: flex;
		align-items: center;
		white-space: nowrap;
		position: relative;
	}

	.node.sel {
		background: #c9cedd;
	}

	.twisty {
		width: 14px;
		flex: none;
		display: flex;
		justify-content: center;
	}

	.t-ico {
		flex: none;
		margin-left: 14px;
	}

	.lock {
		width: 5px;
		height: 7px;
		flex: none;
		margin-left: 10px;
		background: #1b9ae0;
		border-radius: 2px 2px 0 0;
	}

	.lock.check {
		width: 5px;
		height: 5px;
		background: none;
		border-right: 2px solid #e01f2d;
		border-bottom: 2px solid #e01f2d;
		transform: rotate(40deg);
		border-radius: 0;
	}

	.lock + .t-ico {
		margin-left: 2px;
	}

	.cs {
		margin-left: 2px;
		width: 12px;
		flex: none;
		color: #388a34;
		font-size: 10px;
		font-weight: 700;
		line-height: 10px;
	}

	.cs small {
		font-size: 7px;
		vertical-align: top;
	}

	.node-text {
		margin-left: 3px;
		color: #1e1e1e;
	}

	.tree-scroll {
		width: 18px;
		flex: none;
		background: #e8e8ec;
		padding-top: 8px;
		display: flex;
		flex-direction: column;
		box-sizing: border-box;
	}

	.tree-thumb {
		width: 9px;
		height: 59px;
		margin: 134px auto auto;
		background: #c2c3c9;
	}

	.tree-scroll .arrow-d {
		margin-bottom: 8px;
	}

	.tree-h {
		height: 14px;
		flex: none;
		background: #e8e8ec;
		display: flex;
		align-items: center;
		padding: 0 6px;
		width: 124px;
		box-sizing: border-box;
	}

	.tree-hthumb {
		width: 57px;
		height: 8px;
		background: #c2c3c9;
		margin: 0 auto 0 5px;
	}

	.sol-tabs {
		height: 24px;
		flex: none;
		display: flex;
		gap: 1px;
		background: #293955;
	}

	.st {
		flex: 1;
		background: #4d6082;
		display: flex;
		align-items: center;
		justify-content: center;
	}

	.st.on {
		background: #fff;
	}

	.prop {
		height: 355px;
		flex: none;
		display: flex;
		flex-direction: column;
		background: #fff;
		border: 1px solid #8a9bb8;
		box-sizing: border-box;
	}

	.prop-title {
		height: 25px;
		flex: none;
		display: flex;
		align-items: center;
		padding-left: 6px;
		gap: 6px;
		white-space: nowrap;
		overflow: hidden;
	}

	.prop-type {
		width: 47px;
		overflow: hidden;
		flex: none;
	}

	.prop-tools {
		height: 26px;
		flex: none;
		background: #ccd5e8;
		display: flex;
		align-items: center;
		padding-left: 6px;
		gap: 7px;
	}

	.sort {
		width: 20px;
		height: 20px;
		background: #e4e8f2;
		border: 1px solid #5d7192;
		display: flex;
		align-items: center;
		justify-content: center;
	}

	.grid {
		flex: 1;
		padding-top: 0;
	}

	.grid-row {
		height: 19px;
		display: flex;
		align-items: center;
		border-bottom: 1px solid #efeff3;
		box-sizing: border-box;
	}

	.gutter {
		width: 15px;
		height: 100%;
		background: #e6e7ed;
		flex: none;
		display: flex;
		align-items: center;
		justify-content: center;
	}

	.plus {
		width: 8px;
		height: 8px;
		border: 1px solid #111;
		font-style: normal;
		font-size: 9px;
		line-height: 8px;
		text-align: center;
	}

	.g-key {
		width: 52px;
		height: 100%;
		line-height: 19px;
		flex: none;
		overflow: hidden;
		white-space: nowrap;
		border-right: 1px solid #efeff3;
		padding-left: 4px;
		box-sizing: border-box;
		margin-right: 3px;
	}

	.g-val {
		display: flex;
		align-items: center;
		white-space: nowrap;
		overflow: hidden;
	}

	.strong {
		font-weight: 700;
	}

	.swatch {
		width: 18px;
		height: 15px;
		background: #007acc;
		border: 1px solid #000;
		margin-right: 8px;
		flex: none;
	}

	.prop-desc {
		height: 63px;
		flex: none;
		border-top: 2px solid #efeff3;
		padding: 5px 6px;
		box-sizing: border-box;
		display: flex;
		flex-direction: column;
		gap: 2px;
		white-space: nowrap;
	}

	.status {
		height: 23px;
		flex: none;
		background: #10659e;
		color: #eaf2f8;
		display: flex;
		align-items: center;
		padding-left: 4px;
	}

	.ready {
		margin-left: 9px;
		width: 683px;
	}

	.progress {
		width: 103px;
		height: 13px;
		background: #06ad2a;
		flex: none;
		margin-right: 5px;
	}

	.cell {
		flex: none;
	}

	.c-ln {
		margin-left: 8px;
		width: 92px;
	}

	.c-col {
		width: 92px;
	}

	.c-ins {
		margin-left: 44px;
		width: 175px;
	}

	.c-n {
		width: 36px;
		margin-left: 8px;
	}

	.c-n2 {
		margin-left: 5px;
		width: 30px;
	}

	.c-www {
		margin-left: 6px;
		width: 42px;
	}

	.c-master {
		margin-left: 8px;
	}

	.taskbar {
		height: 40px;
		flex: none;
		background: #1d1d17;
		display: flex;
		align-items: stretch;
		color: #fff;
	}

	.slot {
		width: 48px;
		flex: none;
		display: flex;
		align-items: center;
		justify-content: center;
		position: relative;
		box-sizing: border-box;
	}

	.slot.gap {
		margin-left: 3px;
	}

	.slot.hot {
		background: #5a7a55;
	}

	.slot.live::after {
		content: '';
		position: absolute;
		left: 3px;
		right: 3px;
		bottom: 0;
		height: 2px;
		background: #76b9ed;
	}

	.tray {
		flex: 1;
		display: flex;
		align-items: center;
		gap: 7px;
		padding-left: 10px;
		min-width: 0;
	}

	.fz {
		width: 16px;
		height: 22px;
		background: #1a1a90;
		color: #ffe600;
		font-size: 11px;
		font-weight: 700;
		line-height: 22px;
		text-align: center;
		flex: none;
	}

	.clock {
		display: flex;
		flex-direction: column;
		align-items: center;
		line-height: 20px;
		margin-left: 10px;
		width: 62px;
	}

	.notif {
		position: relative;
		margin-left: 9px;
	}

	.notif b {
		position: absolute;
		left: 8px;
		top: 10px;
		width: 15px;
		height: 15px;
		border-radius: 50%;
		background: #333;
		border: 1px solid #aaa;
		box-sizing: border-box;
		font-size: 10px;
		font-weight: 400;
		text-align: center;
		line-height: 14px;
	}
</style>
